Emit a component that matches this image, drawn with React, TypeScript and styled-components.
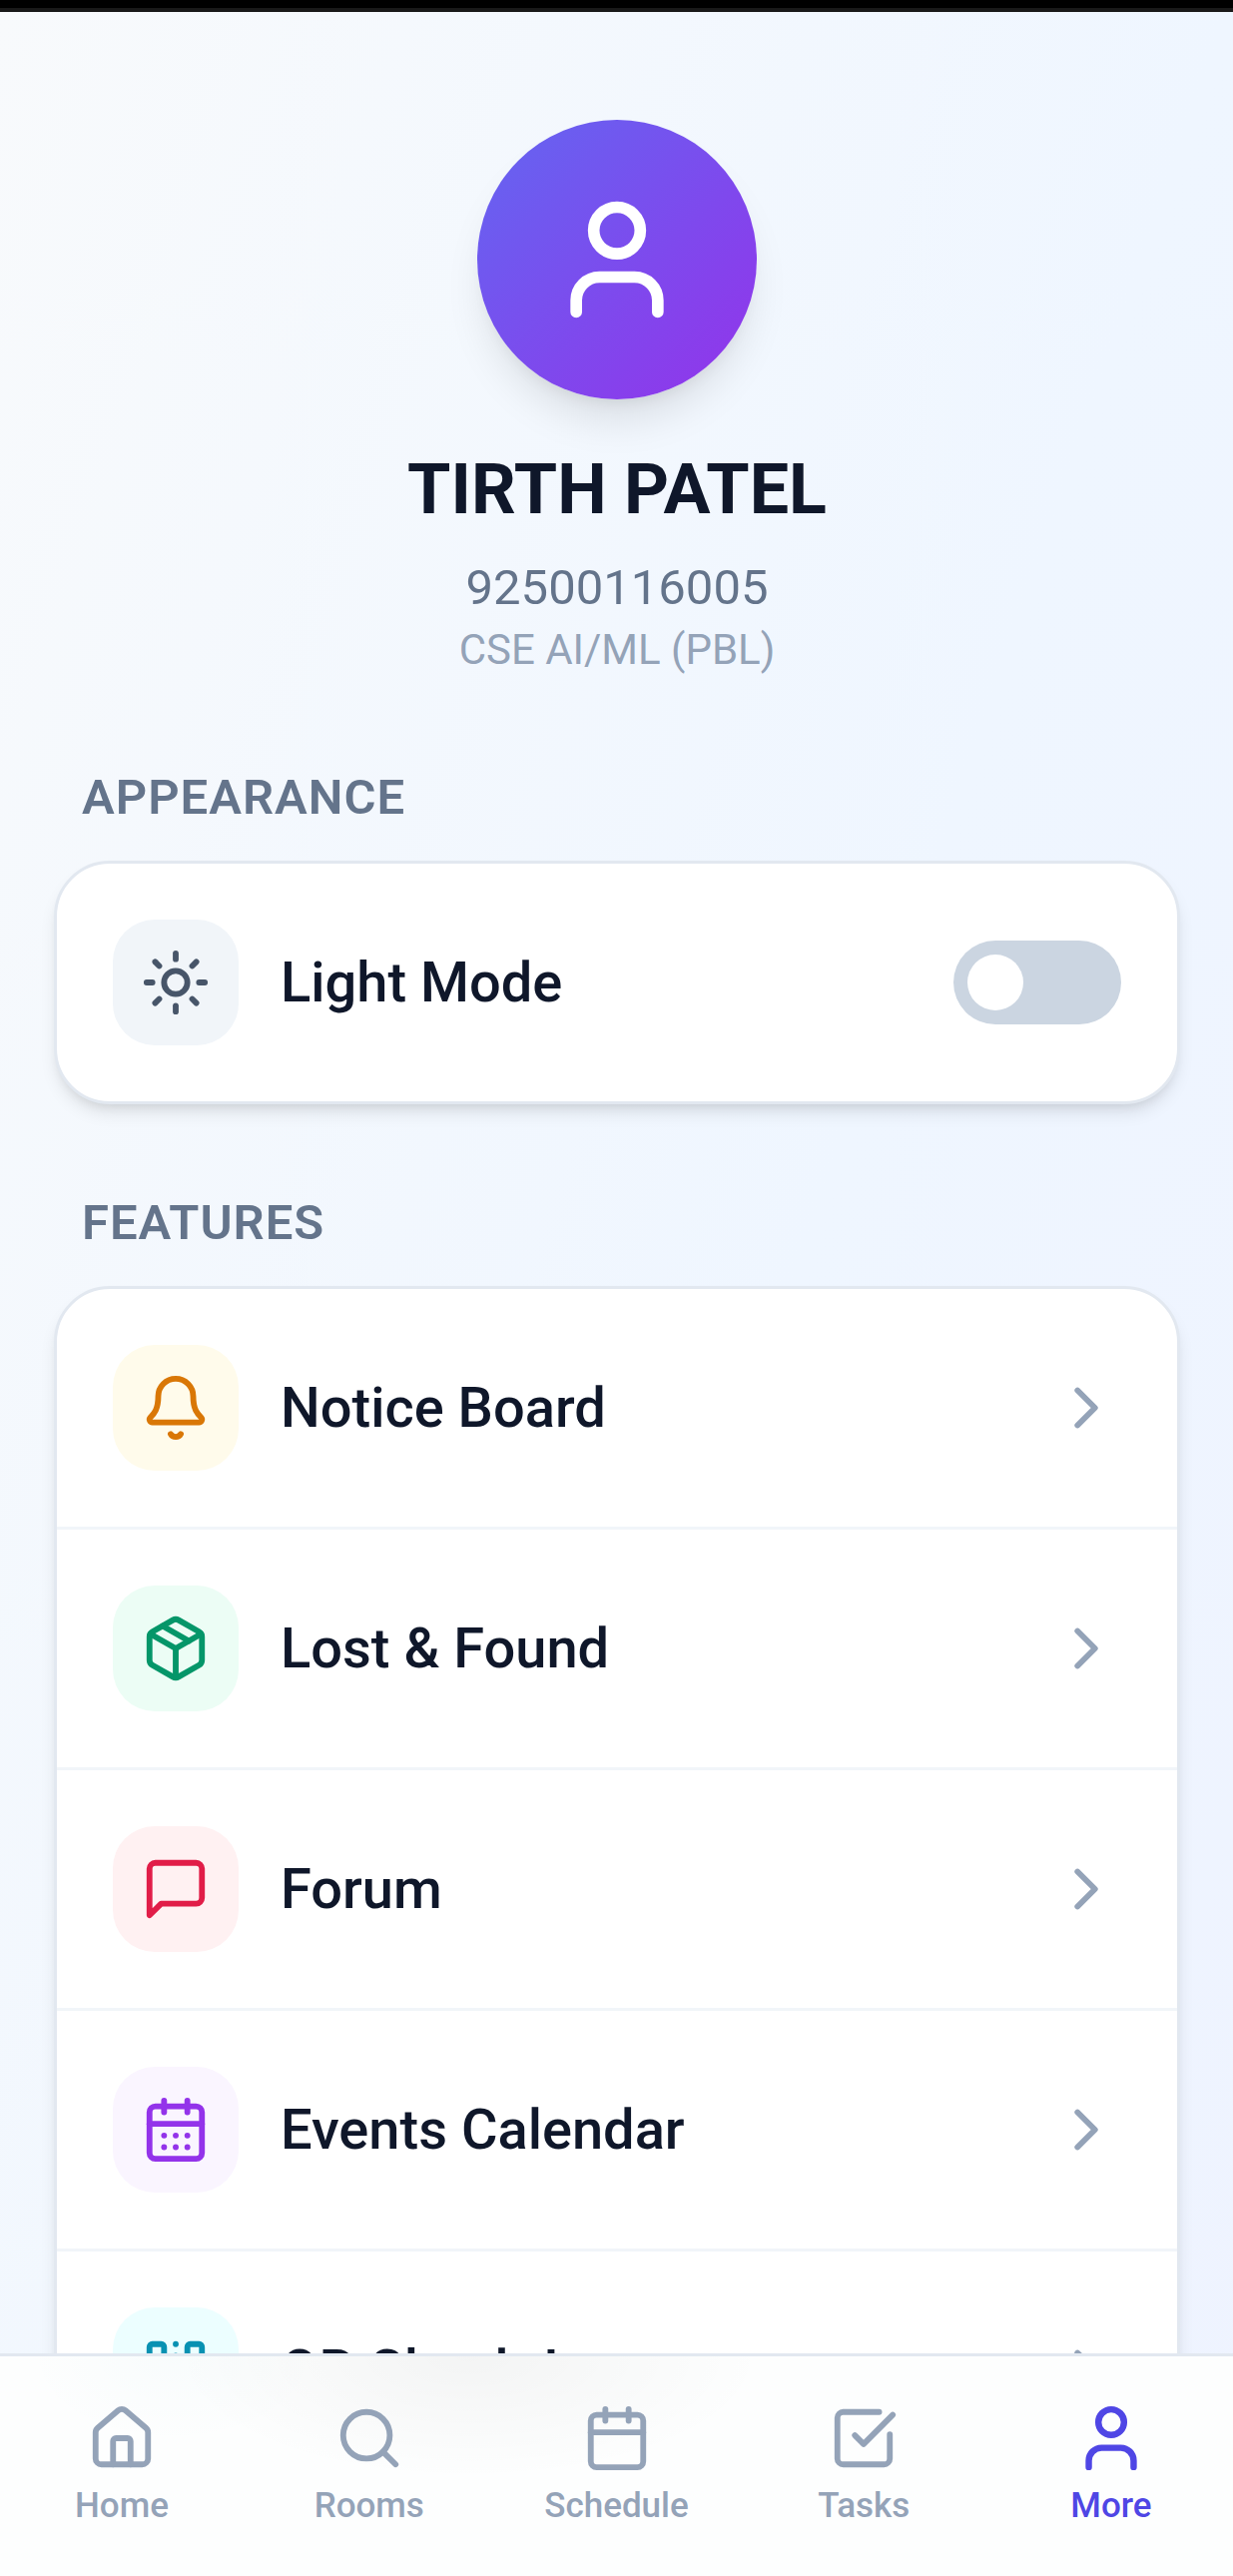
import React, { useState } from 'react';
import styled, { createGlobalStyle } from 'styled-components';
import {
  Bell,
  Calendar,
  CalendarDays,
  ChevronRight,
  House,
  Package,
  QrCode,
  Search,
  SquareCheckBig,
  Sun,
  User,
} from 'lucide-react';

const GlobalStyle = createGlobalStyle`
  *, *::before, *::after { box-sizing: border-box; }
  body {
    margin: 0;
    font-family: Roboto, "Liberation Sans", sans-serif;
    color: #0f172a;
  }
  button { font: inherit; color: inherit; }
`;

const Screen = styled.div`
  display: flex;
  flex-direction: column;
  height: 100vh;
  overflow: hidden;
  background: linear-gradient(to bottom right, #f8fafc 0%, #eff6ff 50%, #eef2ff 100%) top left / 100% 140% no-repeat;
`;

const StatusStrip = styled.div`
  flex: none;
  height: 12px;
  background: #000000;
  border-bottom: 4px solid #191919;
`;

const Content = styled.main`
  flex: 1;
  min-height: 0;
  overflow-y: auto;
  scrollbar-width: none;
  padding: 108px 53px 56px 54px;
`;

const Profile = styled.header`
  display: flex;
  flex-direction: column;
  align-items: center;
  text-align: center;
`;

const Avatar = styled.div`
  display: flex;
  align-items: center;
  justify-content: center;
  width: 280px;
  height: 280px;
  border-radius: 50%;
  color: #ffffff;
  background: linear-gradient(135deg, #6366f1, #9333ea);
  box-shadow: 0 28px 42px -8px rgba(0, 0, 0, 0.1), 0 11px 17px -11px rgba(0, 0, 0, 0.1);
`;

const Name = styled.h1`
  margin: 48px 0 0;
  font-size: 70px;
  line-height: 84px;
  font-weight: 700;
`;

const StudentId = styled.p`
  margin: 25px 0 0;
  font-size: 49px;
  line-height: 64px;
  color: #64748b;
`;

const Course = styled.p`
  margin: 0;
  font-size: 42px;
  line-height: 59px;
  color: #94a3b8;
`;

const Section = styled.section`
  margin-top: 86px;
`;

const SectionTitle = styled.h2`
  margin: 0 0 30px;
  padding: 0 28px;
  font-size: 49px;
  line-height: 66px;
  font-weight: 600;
  letter-spacing: 1px;
  text-transform: uppercase;
  color: #64748b;
`;

const Card = styled.div`
  overflow: hidden;
  border: 3px solid #e2e8f0;
  border-radius: 56px;
  background: #ffffff;
  box-shadow: 0 11px 17px -3px rgba(0, 0, 0, 0.1), 0 6px 11px -6px rgba(0, 0, 0, 0.1);
`;

const SettingRow = styled.label`
  display: flex;
  align-items: center;
  gap: 42px;
  padding: 56px;
  cursor: pointer;
`;

const FeatureList = styled.ul`
  margin: 0;
  padding: 0;
  list-style: none;
`;

const FeatureItem = styled.li`
  & + & {
    border-top: 3px solid #f1f5f9;
  }
`;

const FeatureButton = styled.button`
  display: flex;
  align-items: center;
  gap: 42px;
  width: 100%;
  padding: 56px;
  border: 0;
  background: transparent;
  text-align: left;
  cursor: pointer;
`;

const IconTile = styled.span<{ $bg: string; $fg: string }>`
  display: flex;
  flex: none;
  align-items: center;
  justify-content: center;
  width: 126px;
  height: 126px;
  border-radius: 42px;
  background: ${(p) => p.$bg};
  color: ${(p) => p.$fg};
`;

const RowLabel = styled.span`
  flex: 1;
  font-size: 56px;
  line-height: 84px;
  font-weight: 500;
`;

const Chevron = styled(ChevronRight)`
  flex: none;
  color: #94a3b8;
`;

const Switch = styled.input`
  appearance: none;
  display: flex;
  flex: none;
  align-items: center;
  width: 168px;
  height: 84px;
  margin: 0;
  padding: 0 14px;
  border-radius: 42px;
  background: #cbd5e1;
  cursor: pointer;

  &::before {
    content: '';
    width: 56px;
    height: 56px;
    border-radius: 50%;
    background: #ffffff;
  }

  &:checked {
    justify-content: flex-end;
    background: #4f46e5;
  }
`;

const TabBar = styled.nav`
  display: flex;
  flex: none;
  justify-content: space-between;
  padding: 47px 48px 49px;
  border-top: 3px solid #e2e8f0;
  background:
    radial-gradient(ellipse 24% 56% at 38% 0, rgba(0, 0, 0, 0.04), rgba(0, 0, 0, 0)),
    radial-gradient(ellipse 12% 40% at 14% 0, rgba(8, 145, 178, 0.02), rgba(8, 145, 178, 0)),
    #fdfefe;
`;

const Tab = styled.button<{ $active: boolean }>`
  display: flex;
  flex-direction: column;
  align-items: center;
  gap: 12px;
  width: 148px;
  padding: 0;
  border: 0;
  background: transparent;
  color: ${(p) => (p.$active ? '#4f46e5' : '#94a3b8')};
  font-size: 35px;
  line-height: 42px;
  font-weight: 500;
  cursor: pointer;

  svg {
    transform: ${(p) => (p.$active ? 'scale(1.1)' : 'none')};
  }
`;

type IconProps = { size?: number };

function MessageIcon({ size = 24 }: IconProps) {
  return (
    <svg
      width={size}
      height={size}
      viewBox="0 0 24 24"
      fill="none"
      stroke="currentColor"
      strokeWidth="2"
      strokeLinecap="round"
      strokeLinejoin="round"
      aria-hidden="true"
    >
      <path d="M21 15a2 2 0 0 1-2 2H7l-4 4V5a2 2 0 0 1 2-2h14a2 2 0 0 1 2 2z" />
    </svg>
  );
}

type Icon = React.ComponentType<IconProps>;

const features: { label: string; icon: Icon; bg: string; fg: string }[] = [
  { label: 'Notice Board', icon: Bell, bg: '#fffbeb', fg: '#d97706' },
  { label: 'Lost & Found', icon: Package, bg: '#ecfdf5', fg: '#059669' },
  { label: 'Forum', icon: MessageIcon, bg: '#fff1f2', fg: '#e11d48' },
  { label: 'Events Calendar', icon: CalendarDays, bg: '#faf5ff', fg: '#9333ea' },
  { label: 'QR Check-In', icon: QrCode, bg: '#ecfeff', fg: '#0891b2' },
];

const tabs: { label: string; icon: Icon }[] = [
  { label: 'Home', icon: House },
  { label: 'Rooms', icon: Search },
  { label: 'Schedule', icon: Calendar },
  { label: 'Tasks', icon: SquareCheckBig },
  { label: 'More', icon: User },
];

export default function App() {
  const [dark, setDark] = useState(false);
  const [activeTab, setActiveTab] = useState('More');

  return (
    <Screen>
      <GlobalStyle />
      <StatusStrip />
      <Content>
        <Profile>
          <Avatar>
            <User size={140} />
          </Avatar>
          <Name>TIRTH PATEL</Name>
          <StudentId>92500116005</StudentId>
          <Course>CSE AI/ML (PBL)</Course>
        </Profile>

        <Section>
          <SectionTitle>Appearance</SectionTitle>
          <Card>
            <SettingRow htmlFor="theme-switch">
              <IconTile $bg="#f1f5f9" $fg="#475569">
                <Sun size={70} />
              </IconTile>
              <RowLabel>Light Mode</RowLabel>
              <Switch
                id="theme-switch"
                type="checkbox"
                checked={dark}
                onChange={(e) => setDark(e.target.checked)}
              />
            </SettingRow>
          </Card>
        </Section>

        <Section>
          <SectionTitle>Features</SectionTitle>
          <Card>
            <FeatureList>
              {features.map(({ label, icon: FeatureIcon, bg, fg }) => (
                <FeatureItem key={label}>
                  <FeatureButton type="button">
                    <IconTile $bg={bg} $fg={fg}>
                      <FeatureIcon size={70} />
                    </IconTile>
                    <RowLabel>{label}</RowLabel>
                    <Chevron size={70} />
                  </FeatureButton>
                </FeatureItem>
              ))}
            </FeatureList>
          </Card>
        </Section>
      </Content>

      <TabBar aria-label="Main">
        {tabs.map(({ label, icon: TabIcon }) => (
          <Tab
            key={label}
            type="button"
            $active={label === activeTab}
            aria-current={label === activeTab ? 'page' : undefined}
            onClick={() => setActiveTab(label)}
          >
            <TabIcon size={70} />
            {label}
          </Tab>
        ))}
      </TabBar>
    </Screen>
  );
}
